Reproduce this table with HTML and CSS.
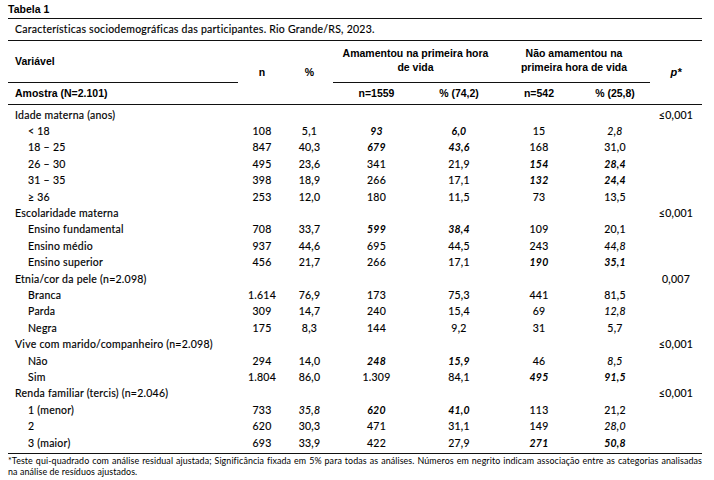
FILE: index.html
```html
<!DOCTYPE html>
<html lang="pt">
<head>
<meta charset="utf-8">
<link rel="stylesheet" href="styles.css">
</head>
<body>
<div class="page">
  <div class="title">Tabela 1</div>
  <div class="caption">Características sociodemográficas das participantes. Rio Grande/RS, 2023.</div>
  <table class="tbl">
    <colgroup>
      <col class="c-var"><col class="c-n"><col class="c-p"><col class="c-an"><col class="c-ap"><col class="c-nn"><col class="c-np"><col class="c-pv">
    </colgroup>
    <thead>
      <tr class="h1">
        <th class="var-h">Variável</th>
        <th rowspan="2">n</th>
        <th rowspan="2">%</th>
        <th colspan="2" class="grp">Amamentou na primeira hora<br>de vida</th>
        <th colspan="2" class="grp">Não amamentou na<br>primeira hora de vida</th>
        <th rowspan="2" class="pv-h"><i>p*</i></th>
      </tr>
      <tr class="h2">
        <th class="amostra">Amostra (N=2.101)</th>
        <th>n=1559</th>
        <th>% (74,2)</th>
        <th>n=542</th>
        <th>% (25,8)</th>
      </tr>
    </thead>
    <tbody>
      <tr class="first"><td class="cat">Idade materna (anos)</td><td></td><td></td><td></td><td></td><td></td><td></td><td>≤0,001</td></tr>
      <tr><td class="sub">&lt; 18</td><td>108</td><td>5,1</td><td class="hl">93</td><td class="hl">6,0</td><td>15</td><td class="it">2,8</td><td></td></tr>
      <tr><td class="sub">18 – 25</td><td>847</td><td>40,3</td><td class="hl">679</td><td class="hl">43,6</td><td>168</td><td>31,0</td><td></td></tr>
      <tr><td class="sub">26 – 30</td><td>495</td><td>23,6</td><td>341</td><td>21,9</td><td class="hl">154</td><td class="hl">28,4</td><td></td></tr>
      <tr><td class="sub">31 – 35</td><td>398</td><td>18,9</td><td>266</td><td>17,1</td><td class="hl">132</td><td class="hl">24,4</td><td></td></tr>
      <tr><td class="sub">≥ 36</td><td>253</td><td>12,0</td><td>180</td><td>11,5</td><td>73</td><td>13,5</td><td></td></tr>
      <tr><td class="cat">Escolaridade materna</td><td></td><td></td><td></td><td></td><td></td><td></td><td>≤0,001</td></tr>
      <tr><td class="sub">Ensino fundamental</td><td>708</td><td>33,7</td><td class="hl">599</td><td class="hl">38,4</td><td>109</td><td>20,1</td><td></td></tr>
      <tr><td class="sub">Ensino médio</td><td>937</td><td>44,6</td><td>695</td><td>44,5</td><td>243</td><td class="it">44,8</td><td></td></tr>
      <tr><td class="sub">Ensino superior</td><td>456</td><td>21,7</td><td>266</td><td>17,1</td><td class="hl">190</td><td class="hl">35,1</td><td></td></tr>
      <tr><td class="cat">Etnia/cor da pele (n=2.098)</td><td></td><td></td><td></td><td></td><td></td><td></td><td>0,007</td></tr>
      <tr><td class="sub">Branca</td><td>1.614</td><td>76,9</td><td>173</td><td>75,3</td><td>441</td><td>81,5</td><td></td></tr>
      <tr><td class="sub">Parda</td><td>309</td><td>14,7</td><td>240</td><td>15,4</td><td>69</td><td class="it">12,8</td><td></td></tr>
      <tr><td class="sub">Negra</td><td>175</td><td>8,3</td><td>144</td><td>9,2</td><td>31</td><td>5,7</td><td></td></tr>
      <tr><td class="cat">Vive com marido/companheiro (n=2.098)</td><td></td><td></td><td></td><td></td><td></td><td></td><td>≤0,001</td></tr>
      <tr><td class="sub">Não</td><td>294</td><td>14,0</td><td class="hl">248</td><td class="hl">15,9</td><td>46</td><td class="it">8,5</td><td></td></tr>
      <tr><td class="sub">Sim</td><td>1.804</td><td>86,0</td><td>1.309</td><td>84,1</td><td class="hl">495</td><td class="hl">91,5</td><td></td></tr>
      <tr><td class="cat">Renda familiar (tercis) (n=2.046)</td><td></td><td></td><td></td><td></td><td></td><td></td><td>≤0,001</td></tr>
      <tr><td class="sub">1 (menor)</td><td>733</td><td class="it">35,8</td><td class="hl">620</td><td class="hl">41,0</td><td>113</td><td>21,2</td><td></td></tr>
      <tr><td class="sub">2</td><td>620</td><td>30,3</td><td>471</td><td>31,1</td><td>149</td><td class="it">28,0</td><td></td></tr>
      <tr class="last"><td class="sub">3 (maior)</td><td>693</td><td>33,9</td><td>422</td><td>27,9</td><td class="hl">271</td><td class="hl">50,8</td><td></td></tr>
    </tbody>
  </table>
  <div class="note">
    <span class="note-l1">*Teste qui-quadrado com análise residual ajustada; Significância fixada em 5% para todas as análises. Números em negrito indicam associação entre as categorias analisadas</span>
    <span class="note-l2">na análise de resíduos ajustados.</span>
  </div>
</div>
</body>
</html>
```
FILE: styles.css
```css
html, body {
  margin: 0;
  padding: 0;
  background: #fff;
}
body {
  font-family: "Lato", "Liberation Sans", sans-serif;
  color: #000;
  width: 714px;
  height: 480px;
  overflow: hidden;
}
.page {
  padding: 2px 12px 0 8px;
}
.title {
  font-family: "Liberation Sans", sans-serif;
  font-weight: bold;
  font-size: 10.5px;
  line-height: 14px;
  padding-bottom: 2px;
  border-bottom: 1px solid #111;
}
.caption {
  font-size: 10.5px;
  line-height: 21px;
  padding-left: 7px;
  letter-spacing: 0.25px;
  -webkit-text-stroke: 0.15px #000;
  border-bottom: 1px solid #111;
}
.tbl {
  width: 694px;
  border-collapse: collapse;
  table-layout: fixed;
  font-size: 10.5px;
  letter-spacing: 0.25px;
}
.c-var { width: 230px; }
.c-n { width: 48px; }
.c-p { width: 47px; }
.c-an { width: 87px; }
.c-ap { width: 78px; }
.c-nn { width: 82px; }
.c-np { width: 70px; }
.c-pv { width: 52px; }
.tbl th {
  font-family: "Liberation Sans", sans-serif;
  font-weight: bold;
  font-size: 10.5px;
  letter-spacing: 0;
  text-align: center;
  padding: 0;
  box-sizing: border-box;
}
.tbl .h1 th {
  height: 41px;
  line-height: 14px;
}
.tbl .h1 .var-h {
  text-align: left;
  padding-left: 7px;
  border-bottom: 1px solid #111;
}
.tbl .h1 .grp {
  border-bottom: 1px solid #111;
  vertical-align: top;
  padding-top: 5px;
}
.tbl .pv-h {
  font-size: 11px;
}
.tbl .h2 th {
  height: 22px;
  line-height: 14px;
  border-bottom: 1px solid #111;
}
.tbl .h2 .amostra {
  text-align: left;
  padding-left: 7px;
}
.tbl thead tr.h1 th[rowspan] {
  border-bottom: 1px solid #111;
}
.tbl td {
  height: 16.4px;
  padding: 0;
  line-height: 14px;
  text-align: center;
  white-space: nowrap;
  -webkit-text-stroke: 0.15px #000;
}
.tbl tr.first td { padding-top: 2px; }
.tbl tr.last td {
  padding-bottom: 2px;
  border-bottom: 1px solid #111;
}
.tbl td.cat {
  text-align: left;
  padding-left: 7px;
}
.tbl td.sub {
  text-align: left;
  padding-left: 20px;
}
.tbl td.hl {
  font-weight: bold;
  font-style: italic;
  -webkit-text-stroke: 0;
}
.tbl td.it {
  font-style: italic;
}
.note {
  margin-top: 1px;
  font-size: 8.9px;
  line-height: 11px;
  letter-spacing: 0.1px;
}
.note-l1 {
  display: block;
  text-align: justify;
  text-align-last: justify;
}
.note-l2 {
  display: block;
}
```
